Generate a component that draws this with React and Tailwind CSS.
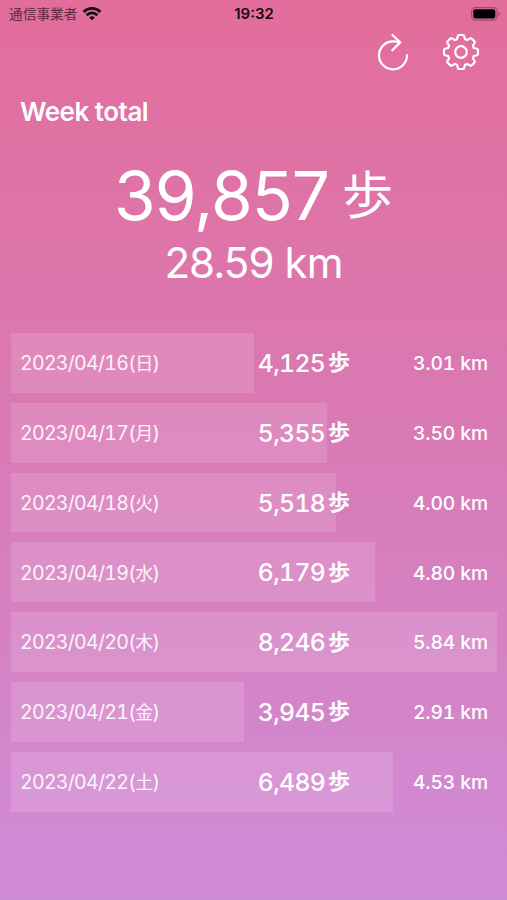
import React from 'react';

const DAYS = [
  { date: '2023/04/16', day: '日', steps: 4125, km: '3.01' },
  { date: '2023/04/17', day: '月', steps: 5355, km: '3.50' },
  { date: '2023/04/18', day: '火', steps: 5518, km: '4.00' },
  { date: '2023/04/19', day: '水', steps: 6179, km: '4.80' },
  { date: '2023/04/20', day: '木', steps: 8246, km: '5.84' },
  { date: '2023/04/21', day: '金', steps: 3945, km: '2.91' },
  { date: '2023/04/22', day: '土', steps: 6489, km: '4.53' },
];

const MAX_STEPS = Math.max(...DAYS.map(d => d.steps));

function WifiIcon() {
  return (
    <svg width="20" height="14" viewBox="0 0 20 14" fill="none" stroke="#170a10" strokeWidth="2.8">
      <path d="M1.6 4.9a12 12 0 0 1 16.8 0" />
      <path d="M4.6 8.2a7.6 7.6 0 0 1 10.8 0" />
      <path d="M10 13.3 7.2 10.5a4 4 0 0 1 5.6 0z" fill="#170a10" stroke="none" />
    </svg>
  );
}

function BatteryIcon() {
  return (
    <svg width="30" height="14" viewBox="0 0 30 14" fill="none">
      <rect x="0.6" y="0.6" width="25.4" height="12.6" rx="3.6" stroke="#9c4d6d" strokeWidth="1.2" />
      <rect x="2.3" y="2.3" width="22" height="9.2" rx="2" fill="#000" />
      <path d="M27.4 4.8c2 .6 2 3.6 0 4.2z" fill="#9c4d6d" />
    </svg>
  );
}

function RefreshIcon() {
  return (
    <svg width="34" height="40" viewBox="0 0 34 40" fill="none" stroke="#fff" strokeWidth="2.2" strokeLinecap="round" strokeLinejoin="round">
      <path d="M31 23A14 14 0 1 1 17 9.3q3.4 0 6.4.8" />
      <path d="M16.5 3l7.7 7.4-7.9 7.9" />
    </svg>
  );
}

function GearIcon() {
  return (
    <svg width="40" height="40" viewBox="-20 -20 40 40" fill="none" stroke="#fff" strokeWidth="2.2" strokeLinejoin="round">
      <path d="M-2 -17H2Q3 -17 3.2 -16L4 -12.8L6.2 -11.9L9 -13.6Q9.9 -14.1 10.6 -13.4L13.4 -10.6Q14.1 -9.9 13.6 -9L11.9 -6.2L12.8 -4L16 -3.2Q17 -3 17 -2V2Q17 3 16 3.2L12.8 4L11.9 6.2L13.6 9Q14.1 9.9 13.4 10.6L10.6 13.4Q9.9 14.1 9 13.6L6.2 11.9L4 12.8L3.2 16Q3 17 2 17H-2Q-3 17 -3.2 16L-4 12.8L-6.2 11.9L-9 13.6Q-9.9 14.1 -10.6 13.4L-13.4 10.6Q-14.1 9.9 -13.6 9L-11.9 6.2L-12.8 4L-16 3.2Q-17 3 -17 2V-2Q-17 -3 -16 -3.2L-12.8 -4L-11.9 -6.2L-13.6 -9Q-14.1 -9.9 -13.4 -10.6L-10.6 -13.4Q-9.9 -14.1 -9 -13.6L-6.2 -11.9L-4 -12.8L-3.2 -16Q-3 -17 -2 -17Z" />
      <circle r="5.8" />
    </svg>
  );
}

function DayRow({ item }) {
  return (
    <li className="relative flex h-[59.8px] items-center px-[9px] pt-[2px] tabular-nums">
      <div
        className="absolute inset-y-0 left-0 bg-white/13"
        style={{ width: `${(item.steps / MAX_STEPS) * 100}%` }}
      />
      <span className="relative w-[177px] text-[19.5px] tracking-[-0.7px] whitespace-nowrap text-white/90">
        {item.date}(<span className="text-[18px]">{item.day}</span>)
      </span>
      <span className="relative flex w-[153px] items-center justify-end gap-[3px] pb-px">
        <span className="text-[24.7px] font-medium tracking-[-0.7px]">{item.steps.toLocaleString('en-US')}</span>
        <span className="pb-[2px] text-[22px] font-bold">歩</span>
      </span>
      <span className="relative flex-1 text-right text-[19.3px] font-medium tracking-[-0.1px] whitespace-nowrap">{item.km} km</span>
    </li>
  );
}

export default function App() {
  return (
    <div className="h-[900px] w-[507px] overflow-hidden bg-linear-to-b from-[#e36d9b] via-[#d97ab6] to-[#cf8cd8] font-['Inter','Noto_Sans_CJK_JP',sans-serif] leading-none text-white">
      <header className="grid h-7 grid-cols-3 items-center pl-[9px] pr-[6px] text-[#170a10]">
        <div className="flex items-center gap-[5px]">
          <span className="pt-px text-[13.7px] text-[#5c2a40]">通信事業者</span>
          <WifiIcon />
        </div>
        <span className="pr-[2px] pb-px text-center text-[15px] font-semibold">19:32</span>
        <div className="flex justify-end">
          <BatteryIcon />
        </div>
      </header>

      <nav className="flex h-12 items-center justify-end gap-[31px] pr-[26px]">
        <RefreshIcon />
        <GearIcon />
      </nav>

      <h1 className="mt-[23px] pl-5 text-[26px] font-semibold tracking-[-0.5px]">Week total</h1>

      <section className="mt-[36px] flex flex-col items-center">
        <div className="flex h-[70px] items-center gap-[13px]">
          <span className="text-[67.5px] tracking-[-1px]">39,857</span>
          <span className="pb-px text-[51px] font-normal">歩</span>
        </div>
        <div className="mt-[11px] text-[42px] tracking-[-0.9px]">28.59 km</div>
      </section>

      <ul className="mt-[49px] ml-[11px] flex w-[486px] flex-col gap-[10px]">
        {DAYS.map(item => (
          <DayRow key={item.date} item={item} />
        ))}
      </ul>
    </div>
  );
}
